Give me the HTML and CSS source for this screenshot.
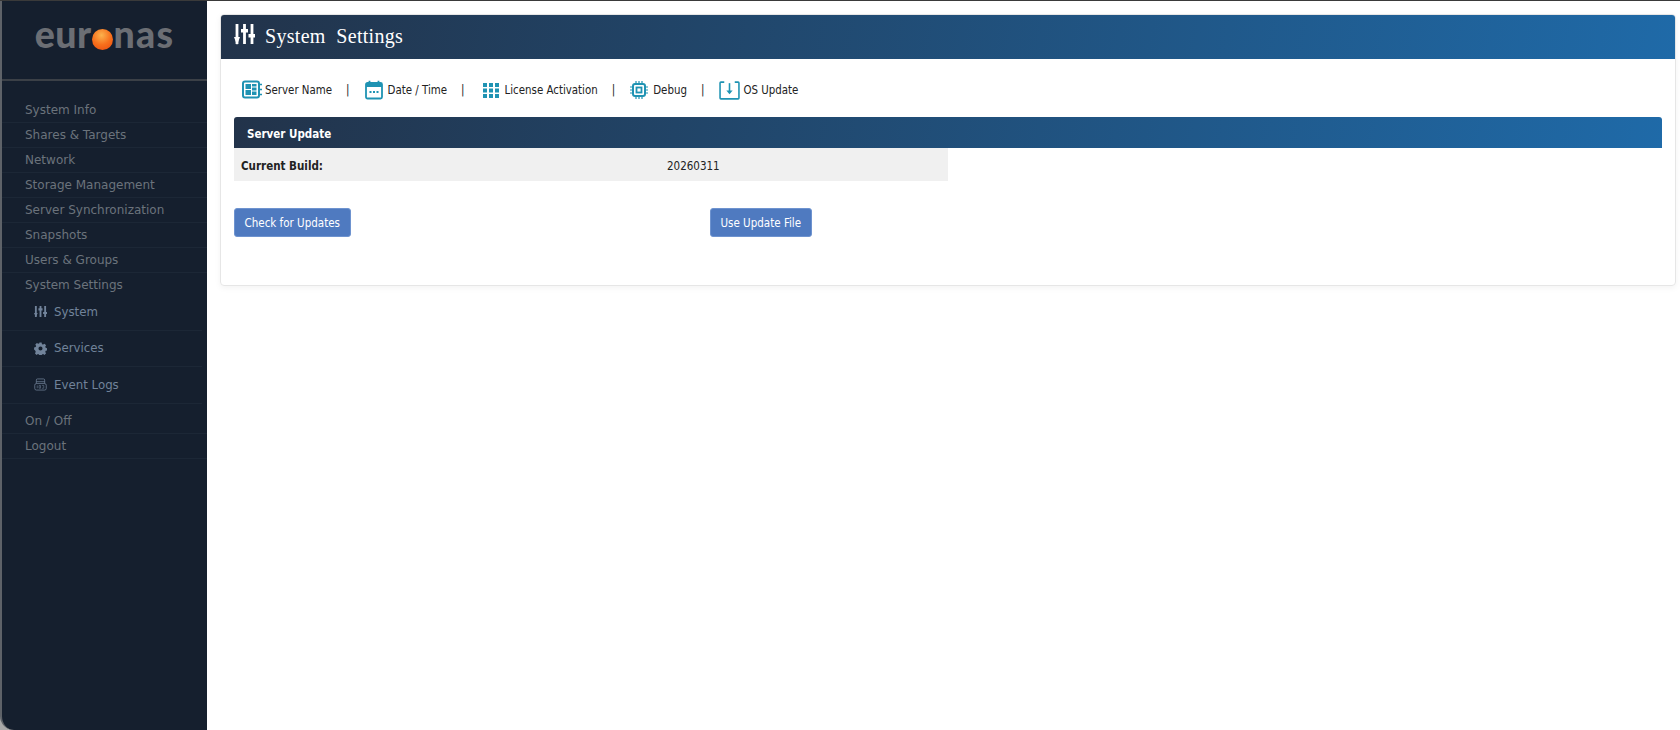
FILE: index.html
```html
<!DOCTYPE html>
<html lang="en">
<head>
<meta charset="utf-8">
<title>System Settings</title>
<link rel="stylesheet" href="styles.css">
</head>
<body>
<div class="app">
  <aside class="sidebar">
    <div class="logo"><span class="logo-start">eur</span><i class="ball"></i><span>nas</span></div>
    <ul class="nav">
      <li>System Info</li>
      <li>Shares &amp; Targets</li>
      <li>Network</li>
      <li>Storage Management</li>
      <li>Server Synchronization</li>
      <li>Snapshots</li>
      <li>Users &amp; Groups</li>
      <li class="plain">System Settings</li>
    </ul>
    <ul class="subnav">
      <li><svg viewBox="0 0 14 14" class="subicon"><path d="M2 1v12M7 1v12M12 1v12" stroke="currentColor" stroke-width="2" fill="none"/><path d="M0 8.600h4L2 13zM4.800 3.600h4.400v2.200H4.800zM9.800 7.600h4.200v2.200H9.800z" fill="currentColor"/></svg>System</li>
      <li><svg viewBox="0 0 14 14" class="subicon"><path fill="currentColor" fill-rule="evenodd" d="M5.800.6h2.400l.4 1.700 1.200.5 1.500-.9 1.700 1.700-.9 1.500.5 1.200 1.700.4v2.400l-1.700.4-.5 1.200.9 1.500-1.700 1.700-1.500-.9-1.200.5-.4 1.700H5.800l-.4-1.700-1.200-.5-1.500.9-1.700-1.700.9-1.500-.5-1.200L.1 8.200V5.800l1.700-.4.5-1.200-.9-1.500 1.700-1.700 1.500.9 1.200-.5zM7 4.800a2.200 2.200 0 1 0 0 4.400 2.200 2.200 0 0 0 0-4.400z"/></svg>Services</li>
      <li><svg viewBox="0 0 14 14" class="subicon"><path d="M2.500 6V2.200Q2.500 1 3.700 1h6.600q1.200 0 1.200 1.200V6M2.500 4h9" stroke="currentColor" stroke-width=".8" fill="none"/><rect x=".8" y="6" width="12.400" height="7" rx="1.800" stroke="currentColor" stroke-width=".8" fill="none"/><path d="M3.500 8v3M5.500 8h1.500v3H5.500zM8.500 8h2v3h-2" stroke="currentColor" stroke-width=".6" fill="none"/></svg>Event Logs</li>
    </ul>
    <ul class="nav">
      <li>On / Off</li>
      <li>Logout</li>
    </ul>
  </aside>
  <main class="main">
    <section class="card">
      <header class="page-head">
        <svg viewBox="0 0 21 21" class="head-icon"><path d="M3 0v20M10.500 0v20M18 0v20" stroke="#fff" stroke-width="2.800" fill="none"/><path d="M0 13h6l-3 8zM7 5h7v3.500H7zM14.500 10h6.500v3.500h-6.500z" fill="#fff"/></svg>
        <h1>System&nbsp; Settings</h1>
      </header>
      <nav class="tools">
        <a class="tool t1"><svg viewBox="0 0 20 20" class="ticon"><rect x="1" y="1.500" width="16" height="16" rx="2" fill="none" stroke="#1f93b3" stroke-width="2"/><path d="M3.500 4h5.500v5H3.500zM10 4h4.500v2.600H10zM10 7.600h4.500v3H10zM3.500 10h5.500v5H3.500zM10 11.500h4.500V15H10z" fill="#1f93b3"/><path d="M18 4.500h2M18 9.500h2M18 14.500h2" stroke="#1f93b3" stroke-width="1.400"/></svg>Server Name</a>
        <span class="sep">|</span>
        <a class="tool t2"><svg viewBox="0 0 18 20" class="ticon cal"><rect x="1" y="3" width="16" height="15.500" rx="1.500" fill="none" stroke="#1f93b3" stroke-width="1.800"/><path d="M1 3h16v4H1z" fill="#1f93b3"/><path d="M4.500.8v3M13.500.8v3" stroke="#1f93b3" stroke-width="1.800"/><path d="M4.500 11h2v2h-2zM8 11h2v2H8zM11.500 11h2v2h-2z" fill="#1f93b3"/></svg>Date / Time</a>
        <span class="sep">|</span>
        <a class="tool t3"><svg viewBox="0 0 16 16" class="ticon grid"><path d="M0 1h4v4H0zM6 1h4v4H6zM12 1h4v4h-4zM0 6.500h4v4H0zM6 6.500h4v4H6zM12 6.500h4v4h-4zM0 12h4v4H0zM6 12h4v4H6zM12 12h4v4h-4z" fill="#1f93b3"/></svg>License Activation</a>
        <span class="sep">|</span>
        <a class="tool t4"><svg viewBox="0 0 18 18" class="ticon chip"><rect x="3" y="3" width="12" height="12" rx="2" fill="none" stroke="#1f93b3" stroke-width="2"/><rect x="6.500" y="6.500" width="5" height="5" fill="none" stroke="#1f93b3" stroke-width="1.800"/><path d="M6 0v3M9 0v3M12 0v3M6 15v3M9 15v3M12 15v3M0 6h3M0 9h3M0 12h3M15 6h3M15 9h3M15 12h3" stroke="#1f93b3" stroke-width="1.200"/></svg>Debug</a>
        <span class="sep">|</span>
        <a class="tool t5"><svg viewBox="0 0 20 18" class="ticon os"><path d="M5 1H1.800Q1 1 1 1.800v14.400q0 .8.800.8h16.400q.8 0 .8-.8V1.800q0-.8-.8-.8H15" fill="none" stroke="#1f93b3" stroke-width="1.500"/><path d="M10 2v9" stroke="#1f93b3" stroke-width="1.500"/><path d="M7 9h6l-3 3.500z" fill="#1f93b3"/></svg>OS Update</a>
      </nav>
      <div class="panel">
        <h2 class="panel-head">Server Update</h2>
        <div class="build-row"><b>Current Build:</b><span>20260311</span></div>
        <div class="actions">
          <button class="btn" type="button">Check for Updates</button>
          <button class="btn" type="button">Use Update File</button>
        </div>
      </div>
    </section>
  </main>
</div>
</body>
</html>
```

FILE: styles.css
```css
* { box-sizing: border-box; }
html, body { margin: 0; height: 100%; }
body { background: #a8a8a8; overflow: hidden; }
.app { display: flex; height: 730px; border-top: 1px solid #3a3a3a; }
ul { list-style: none; margin: 0; padding: 0; }

.sidebar {
  width: 207px;
  flex: none;
  background: #151f2e;
  border-left: 2px solid #5e6268;
  border-bottom-left-radius: 14px;
  font: 12px "DejaVu Sans", sans-serif;
  color: #6b737c;
}
.logo {
  height: 80px;
  border-bottom: 2px solid #3b4047;
  display: flex;
  justify-content: center;
  align-items: flex-start;
  padding: 9px 0 0 0;
  font: 900 37.500px/48px Lato, sans-serif;
  color: #6b6e74;
  letter-spacing: 1.200px;
}
.logo-start { letter-spacing: .4px; }
.ball {
  width: 21px;
  height: 21px;
  margin: 19px 1px 0 0;
  border-radius: 50%;
  background: radial-gradient(circle at 45% 30%, #fbb24d 0, #f7701c 50%, #e8480e 100%);
}
.logo + .nav { margin-top: 17px; }
.nav li {
  height: 25px;
  padding-left: 23px;
  line-height: 24px;
  border-bottom: 1px solid #1c2736;
}
.nav li.plain { border-bottom-color: transparent; }
.subnav { margin: -4px 0 0; padding-bottom: 5.500px; color: #71839a; font-size: 11.800px; }
.subnav li {
  display: flex;
  align-items: center;
  height: 36.500px;
  margin-right: 5px;
  padding-left: 32px;
  border-bottom: 1px solid #1c2736;
}
.subicon { width: 13px; height: 13px; margin-right: 7px; flex: none; }

.main { flex: 1; background: #fff; padding: 13px 4px 0 13px; min-width: 0; }
.card {
  height: 272px;
  border: 1px solid #e6e6e6;
  border-radius: 4px;
  box-shadow: 0 2px 6px rgba(0, 0, 0, .05);
}
.page-head {
  display: flex;
  align-items: center;
  height: 44px;
  padding: 0 0 3px 13px;
  background: linear-gradient(100deg, #22334a 0, #1f6aa8 100%);
  border-radius: 3px 3px 0 0;
  color: #fff;
}
.head-icon { width: 21px; height: 21px; margin: -3px 10px 0 0; }
h1 { margin: 1px 0 0; font: 400 20px "Liberation Serif", serif; letter-spacing: .3px; }

.tools {
  display: flex;
  align-items: center;
  height: 58px;
  padding: 4px 0 0 21px;
  font: 11.400px "DejaVu Sans Condensed", "DejaVu Sans", sans-serif;
  color: #222;
}
.tool { display: flex; align-items: center; gap: 5px; }
.ticon { width: 20px; height: 20px; }
.t1 { gap: 3px; }
.cal { width: 18px; }
.grid { width: 16px; height: 16px; margin-left: 3px; }
.chip { width: 18px; height: 18px; }
.t3 { gap: 6px; }
.os { width: 21px; height: 19px; }
.t5 { gap: 3px; }
.sep { margin: 0 15px 0 14px; }

.panel { padding: 0 13px 0 13px; font: 11.500px "DejaVu Sans Condensed", "DejaVu Sans", sans-serif; color: #222; }
.panel-head {
  margin: 0;
  height: 31px;
  padding-left: 13px;
  font: 700 11.500px/34px "DejaVu Sans Condensed", "DejaVu Sans", sans-serif;
  color: #fff;
  background: linear-gradient(100deg, #22334a 0, #1f6aa8 100%);
  border-radius: 3px 3px 0 0;
}
.build-row {
  display: grid;
  grid-template-columns: 426px 1fr;
  align-items: center;
  width: 714px;
  height: 33px;
  padding: 3px 0 0 7px;
  background: #f0f0f0;
}
.actions { display: grid; grid-template-columns: 476px auto; justify-content: start; margin-top: 27px; }
.btn {
  justify-self: start;
  height: 29px;
  padding: 0 9.500px;
  border: 1px solid #6e93cf;
  border-radius: 3px;
  background: #4f7ac0;
  color: #fff;
  font: 11.500px "DejaVu Sans Condensed", "DejaVu Sans", sans-serif;
}
```
